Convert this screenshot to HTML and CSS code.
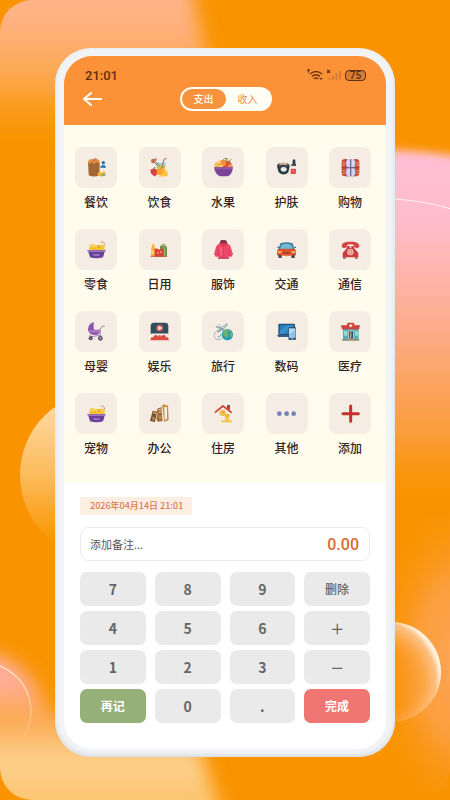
FILE: index.html
```html
<!DOCTYPE html>
<html lang="zh-CN">
<head>
    <meta charset="UTF-8">
    <meta name="viewport" content="width=device-width, initial-scale=1.0">
    <title>记一笔</title>
    <link rel="stylesheet" href="styles.css">
</head>
<body>
    <!-- backdrop -->
    <svg class="backdrop" viewBox="0 0 450 800" preserveAspectRatio="none" aria-hidden="true">
        <defs>
            <linearGradient id="bgPeach" gradientUnits="userSpaceOnUse" x1="0" y1="0" x2="0" y2="150">
                <stop offset="0" stop-color="#ffb48a"/>
                <stop offset="0.2" stop-color="#feb07a"/>
                <stop offset="0.55" stop-color="#fca648"/>
                <stop offset="1" stop-color="#fa9500" stop-opacity="0"/>
            </linearGradient>
            <linearGradient id="bgPink" gradientUnits="userSpaceOnUse" x1="0" y1="150" x2="0" y2="510">
                <stop offset="0" stop-color="#ffbfd6"/>
                <stop offset="0.2" stop-color="#ffbccb"/>
                <stop offset="0.5" stop-color="#fdac8a"/>
                <stop offset="0.8" stop-color="#fb9c38"/>
                <stop offset="1" stop-color="#fa9500" stop-opacity="0"/>
            </linearGradient>
            <linearGradient id="bgMoon" x1="0" y1="0" x2="0" y2="1">
                <stop offset="0" stop-color="#fee0b0"/>
                <stop offset="0.5" stop-color="#fcbb5c"/>
                <stop offset="0.9" stop-color="#fa9500"/>
            </linearGradient>
            <linearGradient id="bgCorner" gradientUnits="userSpaceOnUse" x1="0" y1="650" x2="0" y2="800">
                <stop offset="0" stop-color="#ffb3b4"/>
                <stop offset="0.2" stop-color="#ffae9c"/>
                <stop offset="0.45" stop-color="#fca84e"/>
                <stop offset="0.75" stop-color="#fdd190"/>
                <stop offset="1" stop-color="#fcc56e"/>
            </linearGradient>
            <radialGradient id="bgRing" cx="0.34" cy="0.6" r="0.66">
                <stop offset="0.5" stop-color="#fb9a2a" stop-opacity="0.1"/>
                <stop offset="0.75" stop-color="#fca849"/>
                <stop offset="0.92" stop-color="#fdbf80"/>
                <stop offset="1" stop-color="#fff0dc"/>
            </radialGradient>
            <radialGradient id="bgGlow">
                <stop offset="0" stop-color="#fda65a"/>
                <stop offset="0.5" stop-color="#fca14a" stop-opacity="0.8"/>
                <stop offset="1" stop-color="#fa9510" stop-opacity="0"/>
            </radialGradient>
            <linearGradient id="bgLine" x1="0" y1="0" x2="0" y2="1">
                <stop offset="0" stop-color="#ffe6cc"/>
                <stop offset="1" stop-color="#ffe6cc" stop-opacity="0"/>
            </linearGradient>
            <filter id="soft"><feGaussianBlur stdDeviation="9"/></filter>
            <filter id="softer"><feGaussianBlur stdDeviation="4"/></filter>
            <clipPath id="sheet"><rect width="450" height="800" rx="32"/></clipPath>
        </defs>
        <g clip-path="url(#sheet)">
            <path d="M-40-40H188Q195 20 212 70L200 160H-40Z" fill="url(#bgPeach)" filter="url(#soft)"/>
            <path d="M340 152Q400 145 480 160V510H340Z" fill="url(#bgPink)" filter="url(#softer)"/>
            <path d="M360 198Q415 197 455 210" fill="none" stroke="#fff2ee"/>
            <ellipse cx="460" cy="660" rx="85" ry="160" fill="url(#bgGlow)"/>
            <circle cx="104" cy="475" r="84" fill="url(#bgMoon)"/>
            <circle cx="391" cy="672" r="50" fill="url(#bgRing)"/>
            <path d="M-40 652Q20 648 44 700Q60 730 120 730H195Q205 770 232 840H-40Z" fill="url(#bgCorner)" filter="url(#soft)"/>
            <path d="M-4 664Q30 678 31 711Q30 735 12 750" fill="none" stroke="url(#bgLine)" stroke-width="1.4"/>
        </g>
    </svg>

    <svg width="0" height="0" class="sprite" aria-hidden="true">
        <symbol id="i-bowl" viewBox="0 0 57 57">
            <path d="M6 31L8 16L15 11L22 15L50 14Q56 22 51 31Z" fill="#f8c630"/>
            <path d="M10 18L14 13L20 18L47 17L45 22H12Z" fill="#ffdb63"/>
            <path d="M14 24h3m6 0h3M33 17v7m6-7v6" stroke="#a86824" stroke-width="2"/>
            <path d="M41 6Q52 3 53 17" fill="none" stroke="#d99770" stroke-width="3"/>
            <path d="M0 30H57L54 35H3Z" fill="#9269b6"/>
            <path d="M4 35H53L48 52Q29 58 9 52Z" fill="#6a3f99"/>
            <path d="M19 45h19" stroke="#a98bd0" stroke-width="4"/>
        </symbol>
    </svg>

    <main class="phone">
        <div class="screen">
            <header class="header">
                <div class="statusbar">
                    <span class="time">21:01</span>
                    <div class="signals">
                        <svg class="wifi" viewBox="0 0 16 12" aria-hidden="true">
                            <path d="M3 5Q9 0 15 5M5 7.500Q9 4 13 7.500M7 10Q9 8 11 10" fill="none" stroke="#6f3710" stroke-width="1.600"/>
                            <path d="M0 2l1.500-2l1.500 2M1.500 0v4" fill="none" stroke="#6f3710"/>
                            <path d="M12 9l2 2l2-2Z" fill="#6f3710"/>
                        </svg>
                        <svg class="cell" viewBox="0 0 14 12" aria-hidden="true">
                            <path d="M0 1l3 3m0-3l-3 3" stroke="#6f3710" stroke-width="1.400"/>
                            <path d="M2.500 11V9M6 11V7M9.500 11V4M13 11V2" stroke="#d57c38" stroke-width="2"/>
                        </svg>
                        <span class="battery">75</span>
                    </div>
                </div>
                <div class="navbar">
                    <button class="back" type="button" aria-label="返回">
                        <svg viewBox="0 0 20 16" aria-hidden="true">
                            <path d="M8 2L1 8L8 14M1 8H18" fill="none" stroke="#fff" stroke-width="2" stroke-linecap="round" stroke-linejoin="round"/>
                        </svg>
                    </button>
                    <div class="switch">
                        <button class="switch-item active" type="button">支出</button>
                        <button class="switch-item" type="button">收入</button>
                    </div>
                </div>
            </header>

            <section class="categories">
                <button class="category" type="button">
                    <span class="tile"><svg viewBox="0 0 57 57">
                        <path d="M3 12L11 3L19 9L25 0L34 6L38 14V52Q21 59 5 52Z" fill="#a76b38"/>
                        <path d="M2 11L10 3L16 8L25 2L37 7L36 16L28 12L21 18L15 12L7 17Z" fill="#e3903d"/>
                        <path d="M9 19v33M18 20v34M28 18v36" stroke="#96602f" stroke-width="2"/>
                        <circle cx="20" cy="6" r="4" fill="#e65d3f"/>
                        <circle cx="49" cy="14" r="5" fill="#2b70a7"/>
                        <path d="M39 29Q42 20 49 20Q56 20 57 30Z" fill="#317eb8"/>
                        <path d="M30 51L37 40L44 45L52 38L56 50L46 56Z" fill="#f3b632"/>
                        <path d="M44 50l11 1" stroke="#509b98" stroke-width="4"/>
                    </svg></span>
                    <span class="label">餐饮</span>
                </button>
                <button class="category" type="button">
                    <span class="tile"><svg viewBox="0 0 57 57">
                        <path d="M18 14H48L43 49H23Z" fill="#a9d3d2"/>
                        <path d="M22 25L45 23L42 49H25Z" fill="#f4b63d"/>
                        <path d="M12 11L25 26M36 25L43 3L50 1" fill="none" stroke="#a85e3e" stroke-width="3"/>
                        <circle cx="10" cy="9" r="7" fill="#b27154"/>
                        <circle cx="17" cy="5" r="4" fill="#cf8467"/>
                        <path d="M1 37Q9 27 21 36Q25 49 15 55Q3 53 1 37Z" fill="#df423d"/>
                        <path d="M11 32l5-4" stroke="#669340" stroke-width="4"/>
                        <circle cx="30" cy="41" r="10" fill="#f7a52d"/>
                        <path d="M23 54Q41 53 44 34Q56 39 53 53Q40 58 23 54Z" fill="#ffc640"/>
                        <path d="M20 12l11 12M32 31l10-6" stroke="#538f91" stroke-width="3"/>
                    </svg></span>
                    <span class="label">饮食</span>
                </button>
                <button class="category" type="button">
                    <span class="tile"><svg viewBox="0 0 57 57">
                        <circle cx="15" cy="22" r="13" fill="#f7b541"/>
                        <circle cx="39" cy="22" r="14" fill="#d94b39"/>
                        <circle cx="27" cy="15" r="10" fill="#f1903b"/>
                        <path d="M8 16l6-6l6 6M17 25l10-4" fill="none" stroke="#ffe090" stroke-width="4"/>
                        <path d="M28 6Q31-1 40 2L34 10M41 12l11-8" fill="none" stroke="#778a3c" stroke-width="3"/>
                        <circle cx="49" cy="25" r="7" fill="#f09849"/>
                        <path d="M0 28H57Q54 53 39 55H19Q4 51 0 28Z" fill="#7a4399"/>
                        <path d="M1 28H56L54 34H3Z" fill="#8f58a9"/>
                    </svg></span>
                    <span class="label">水果</span>
                </button>
                <button class="category" type="button">
                    <span class="tile"><svg viewBox="0 0 57 57">
                        <ellipse cx="19" cy="23" rx="19" ry="9" fill="#3e4854"/>
                        <path d="M7 17Q18 11 31 17L29 22Q17 17 8 22Z" fill="#dbb99c"/>
                        <path d="M0 25Q19 31 38 25L34 43Q20 56 5 43Z" fill="#263744"/>
                        <ellipse cx="20" cy="34" rx="9" ry="7" fill="#eceae2"/>
                        <path d="M47 7L51 3L55 7V16L58 20H44L47 15Z" fill="#28394b"/>
                        <path d="M43 19H57V24H43Z" fill="#395165"/>
                        <rect x="41" y="32" width="16" height="16" rx="2" fill="#dd4b51"/>
                        <path d="M45 36l9 8" stroke="#f26668" stroke-width="5"/>
                    </svg></span>
                    <span class="label">护肤</span>
                </button>
                <button class="category" type="button">
                    <span class="tile"><svg viewBox="0 0 57 57">
                        <rect x="2" y="3" width="53" height="52" rx="10" fill="#c64d36"/>
                        <path d="M18 3H40Q48 16 41 29Q48 43 40 55H18Q10 43 17 29Q10 16 18 3Z" fill="#d9d4ed"/>
                        <path d="M18 3Q10 16 17 27M40 3Q48 16 41 27M17 31Q10 43 18 55M41 31Q48 43 40 55" fill="none" stroke="#8c5c99" stroke-width="2"/>
                        <path d="M2 29H55" stroke="#9c413c" stroke-width="3"/>
                        <path d="M29 4V54M20 29H38" stroke="#6f689f" stroke-width="4"/>
                        <path d="M5 14h6M5 21h6M5 38h6M5 46h6M47 14h6M47 21h6M47 38h6M47 46h6" stroke="#f1a061" stroke-width="4"/>
                    </svg></span>
                    <span class="label">购物</span>
                </button>

                <button class="category" type="button">
                    <span class="tile"><svg><use href="#i-bowl"/></svg></span>
                    <span class="label">零食</span>
                </button>
                <button class="category" type="button">
                    <span class="tile"><svg viewBox="0 0 57 57">
                        <path d="M8 12H13V20L20 29V48H3V28Z" fill="#f4b13d"/>
                        <path d="M3 31H20V42H3Z" fill="#fbd170"/>
                        <path d="M30 17H48L51 23V49H31Z" fill="#6f8c4b"/>
                        <path d="M35 11H46V19H35Z" fill="#a6b26f"/>
                        <path d="M44 22V48" stroke="#9bb36b" stroke-width="4"/>
                        <path d="M13 28Q20 23 28 29Q36 24 40 30V50H14Z" fill="#dc4136"/>
                        <path d="M22 36h4v5h-4zM31 34h4v5h-4z" fill="#ffb084"/>
                        <path d="M2 49H51" stroke="#be5837" stroke-width="3"/>
                    </svg></span>
                    <span class="label">日用</span>
                </button>
                <button class="category" type="button">
                    <span class="tile"><svg viewBox="0 0 57 57">
                        <path d="M18 8L38 8L49 17L57 43L51 52L44 48L45 56H12L13 48L6 52L0 43L7 18Z" fill="#ef4968"/>
                        <path d="M19 2Q29-3 38 3L40 12H17Z" fill="#843245"/>
                        <path d="M17 12Q28 6 40 12L29 20Z" fill="#d63b59"/>
                        <path d="M14 28L11 48M43 27L47 48" stroke="#c93553" stroke-width="2"/>
                        <path d="M29 18V55" stroke="#d63b59" stroke-width="2"/>
                        <path d="M20 23l3 22" stroke="#fb6480" stroke-width="5"/>
                        <path d="M12 54H45" stroke="#b83b54" stroke-width="3"/>
                    </svg></span>
                    <span class="label">服饰</span>
                </button>
                <button class="category" type="button">
                    <span class="tile"><svg viewBox="0 0 57 57">
                        <path d="M10 10Q28 4 47 10L53 28H4Z" fill="#437e9e"/>
                        <path d="M14 14Q28 9 43 14L48 27H9Z" fill="#70b9d1"/>
                        <path d="M3 26H54L57 34V46Q29 51 0 46V33Z" fill="#d95231"/>
                        <path d="M2 34H15L12 39H2ZM42 34H55V39H45Z" fill="#ffb85b"/>
                        <path d="M4 45H14V54H5ZM43 45H53V54H43Z" fill="#394755"/>
                        <path d="M18 36H39L36 42H21Z" fill="#a8422f"/>
                        <path d="M12 46H45" stroke="#f28048" stroke-width="3"/>
                        <path d="M1 22h5m46 0h5" stroke="#377793" stroke-width="4"/>
                    </svg></span>
                    <span class="label">交通</span>
                </button>
                <button class="category" type="button">
                    <span class="tile"><svg viewBox="0 0 57 57">
                        <path d="M2 21Q0 8 19 5H38Q57 8 55 21L48 25L39 21V15Q28 11 18 15V21L9 25Z" fill="#d54443"/>
                        <path d="M19 18H26V23H31V18H38L40 25L52 39V52H5V39L17 25Z" fill="#cc3b3d"/>
                        <circle cx="28" cy="36" r="10" fill="#f4b4aa"/>
                        <circle cx="28" cy="36" r="6" fill="#e2726c"/>
                        <circle cx="28" cy="36" r="3" fill="#fff0e5"/>
                        <path d="M10 52v4m36-4v4" stroke="#8c3435" stroke-width="7"/>
                    </svg></span>
                    <span class="label">通信</span>
                </button>

                <button class="category" type="button">
                    <span class="tile"><svg viewBox="0 0 57 57">
                        <path d="M3 25Q2 6 20 0V23H42Q40 38 25 39Q7 40 3 25Z" fill="#8e5aab"/>
                        <path d="M4 22L20 24M9 9l11 14" stroke="#7c4a99" stroke-width="2"/>
                        <path d="M4 25H41L38 31H7Z" fill="#b07bc6"/>
                        <path d="M37 26L45 13H53M38 29L42 45M8 38L13 46M11 44L41 40" fill="none" stroke="#9f84b2" stroke-width="3"/>
                        <circle cx="11" cy="49" r="6" fill="#53415c"/>
                        <circle cx="40" cy="49" r="7" fill="#53415c"/>
                        <circle cx="11" cy="49" r="2" fill="#c8bccd"/>
                        <circle cx="40" cy="49" r="3" fill="#c8bccd"/>
                    </svg></span>
                    <span class="label">母婴</span>
                </button>
                <button class="category" type="button">
                    <span class="tile"><svg viewBox="0 0 57 57">
                        <path d="M2 35V12Q2 2 12 2H45Q55 2 55 12V35Z" fill="#304e5b"/>
                        <circle cx="29" cy="18" r="10" fill="#e65e64"/>
                        <path d="M25 11L37 18L25 25Z" fill="#fff2e8"/>
                        <path d="M5 35H53V41H5Z" fill="#f5ede4"/>
                        <circle cx="17" cy="45" r="6" fill="#c63f36"/>
                        <circle cx="29" cy="45" r="6" fill="#e45842"/>
                        <circle cx="41" cy="45" r="6" fill="#c63f36"/>
                        <path d="M4 46Q29 43 54 46L57 55H1Z" fill="#dc4c3f"/>
                    </svg></span>
                    <span class="label">娱乐</span>
                </button>
                <button class="category" type="button">
                    <span class="tile"><svg viewBox="0 0 57 57">
                        <circle cx="40" cy="38" r="17" fill="#299eb2"/>
                        <path d="M32 23L42 21L47 28L39 32L43 41L36 47L27 39L28 29ZM49 28L56 36L53 47L47 41Z" fill="#72ae77"/>
                        <path d="M24 49Q5 59 1 43Q-1 29 16 23L31 20" fill="none" stroke="#9cb8be" stroke-width="3"/>
                        <path d="M10 3L23 16L38 4L42 8L29 21L31 28L28 29L23 25L12 33L9 30L18 21L4 15L9 11L21 17Z" fill="#91a4aa"/>
                        <path d="M15 6L27 18L37 7" fill="none" stroke="#d6dfdf" stroke-width="3"/>
                        <path d="M11 45Q18 46 22 36" fill="none" stroke="#5ba8aa" stroke-width="3"/>
                    </svg></span>
                    <span class="label">旅行</span>
                </button>
                <button class="category" type="button">
                    <span class="tile"><svg viewBox="0 0 57 57">
                        <rect x="4" y="5" width="50" height="35" rx="3" fill="#244e73"/>
                        <path d="M8 9H50V36H8Z" fill="#287ebd"/>
                        <path d="M8 28L31 9H50L19 36H8Z" fill="#398fca"/>
                        <path d="M0 39H48V45H4Z" fill="#315e82"/>
                        <rect x="34" y="15" width="23" height="39" rx="4" fill="#345875"/>
                        <path d="M36 19H55V47H36Z" fill="#b4d9f2"/>
                        <path d="M36 38L55 22V47H36Z" fill="#8ec4ea"/>
                        <circle cx="46" cy="51" r="2" fill="#e4eef3"/>
                    </svg></span>
                    <span class="label">数码</span>
                </button>
                <button class="category" type="button">
                    <span class="tile"><svg viewBox="0 0 57 57">
                        <path d="M6 20H53V55H6Z" fill="#55adb8"/>
                        <path d="M0 10H17L20 2H38L41 10H57L54 22H3Z" fill="#cf4139"/>
                        <path d="M29 6V16M24 11H34" stroke="#fff1e6" stroke-width="4"/>
                        <path d="M22 25H38V53H22Z" fill="#edc6a5"/>
                        <path d="M24 28H36V50H24Z" fill="#315268"/>
                        <path d="M9 27H19V41H9ZM42 27H51V41H42Z" fill="#8bdee0"/>
                        <path d="M31 30Q25 34 30 39L27 49" fill="none" stroke="#e8e1cf" stroke-width="3"/>
                        <path d="M3 54H55" stroke="#9b6e57" stroke-width="3"/>
                    </svg></span>
                    <span class="label">医疗</span>
                </button>

                <button class="category" type="button">
                    <span class="tile"><svg><use href="#i-bowl"/></svg></span>
                    <span class="label">宠物</span>
                </button>
                <button class="category" type="button">
                    <span class="tile"><svg viewBox="0 0 57 57">
                        <path d="M8 20L22 23L15 54L0 51Z" fill="#76502e"/>
                        <path d="M22 14L34 9L38 51L23 53L18 43Z" fill="#98683a"/>
                        <path d="M36 5L41 1L54 5L56 48L42 54Z" fill="#c98e45"/>
                        <path d="M43 8L51 10V45L44 47Z" fill="#f5ede4"/>
                        <path d="M9 26l9 2M25 18l8-2M26 25l8-1" stroke="#e2b66b" stroke-width="4"/>
                        <path d="M8 38l6 1l-2 9l-6-1zM26 34l8-1v12l-8 1z" fill="#c18a4a"/>
                        <path d="M22 26L17 51M37 10L40 51" stroke="#f5ede4" stroke-width="2"/>
                    </svg></span>
                    <span class="label">办公</span>
                </button>
                <button class="category" type="button">
                    <span class="tile"><svg viewBox="0 0 57 57">
                        <path d="M3 25L27 6L53 26" fill="none" stroke="#c83e3d" stroke-width="5" stroke-linejoin="round"/>
                        <path d="M39 3H48V18L39 12Z" fill="#b23a3b"/>
                        <circle cx="26" cy="27" r="9" fill="#e9ad3e"/>
                        <circle cx="26" cy="27" r="6" fill="#ffd85b"/>
                        <path d="M34 30H46V42H34Z" fill="#edb42e"/>
                        <path d="M22 52H54M32 40h12m-11 6h12" stroke="#f5c23f" stroke-width="5"/>
                        <path d="M24 26h5m-2-4v9" stroke="#bd802f" stroke-width="2"/>
                    </svg></span>
                    <span class="label">住房</span>
                </button>
                <button class="category" type="button">
                    <span class="tile"><svg viewBox="0 0 57 57">
                        <circle cx="7" cy="29" r="7" fill="#7280bd"/>
                        <circle cx="29" cy="29" r="7" fill="#7280bd"/>
                        <circle cx="50" cy="29" r="7" fill="#7280bd"/>
                    </svg></span>
                    <span class="label">其他</span>
                </button>
                <button class="category" type="button">
                    <span class="tile"><svg viewBox="0 0 57 57">
                        <path d="M29 6V52M6 29H52" stroke="#c9302c" stroke-width="9" stroke-linecap="round"/>
                    </svg></span>
                    <span class="label">添加</span>
                </button>
            </section>

            <section class="entry">
                <button class="date" type="button">2026年04月14日 21:01</button>
                <div class="note">
                    <input class="note-input" type="text" placeholder="添加备注..." aria-label="添加备注">
                    <output class="amount">0.00</output>
                </div>
                <div class="keypad">
                    <button class="key" type="button">7</button>
                    <button class="key" type="button">8</button>
                    <button class="key" type="button">9</button>
                    <button class="key word" type="button">删除</button>
                    <button class="key" type="button">4</button>
                    <button class="key" type="button">5</button>
                    <button class="key" type="button">6</button>
                    <button class="key sign" type="button">＋</button>
                    <button class="key" type="button">1</button>
                    <button class="key" type="button">2</button>
                    <button class="key" type="button">3</button>
                    <button class="key sign" type="button">－</button>
                    <button class="key word again" type="button">再记</button>
                    <button class="key" type="button">0</button>
                    <button class="key" type="button">.</button>
                    <button class="key word done" type="button">完成</button>
                </div>
            </section>
        </div>
    </main>
</body>
</html>
```
FILE: styles.css
```css
* {
    margin: 0;
    padding: 0;
    box-sizing: border-box;
}

body {
    font-family: "Noto Sans CJK SC", "Noto Sans", sans-serif;
    background: #f99300;
    min-height: 100vh;
    padding: 48px 55px 43px;
    display: flex;
    position: relative;
    overflow-x: hidden;
}

button,
input {
    font-family: inherit;
    border: none;
    background: none;
}

button {
    cursor: pointer;
}

.backdrop {
    position: absolute;
    top: 0;
    left: 0;
    width: 100%;
    height: 100%;
}

.sprite {
    position: absolute;
}

.phone {
    position: relative;
    flex: 1;
    display: flex;
    padding: 8px 9px;
    border-radius: 36px;
    background: #f1f3f5;
    box-shadow: inset 0 -2px 4px #d5dadf;
}

.screen {
    flex: 1;
    display: flex;
    flex-direction: column;
    border-radius: 28px;
    background: #fff;
    overflow: hidden;
}

/* header */
.header {
    background: #fc9237;
    height: 69px;
    padding: 10px 20px 0 21px;
}

.statusbar {
    display: flex;
    align-items: center;
    justify-content: space-between;
    height: 18px;
    color: #5f2f10;
}

.time {
    font-family: Roboto, sans-serif;
    font-size: 13px;
    font-weight: 500;
}

.signals {
    display: flex;
    align-items: center;
    gap: 4px;
}

.wifi {
    width: 16px;
    height: 12px;
}

.cell {
    width: 14px;
    height: 12px;
}

.battery {
    width: 21px;
    height: 11px;
    border: 1px solid #5f2f10;
    border-radius: 4px;
    background: #d87c35;
    font-family: Roboto, sans-serif;
    font-size: 10px;
    font-weight: 500;
    line-height: 10px;
    text-align: center;
}

.navbar {
    display: grid;
    grid-template-columns: 1fr auto 1fr;
    align-items: center;
    margin-top: 3px;
}

.back {
    justify-self: start;
    width: 20px;
    height: 24px;
    margin-left: -2px;
}

.back svg {
    display: block;
    width: 20px;
    height: 16px;
}

.switch {
    display: flex;
    height: 24px;
    padding: 2px;
    border-radius: 12px;
    background: #fffef5;
}

.switch-item {
    width: 44px;
    border-radius: 10px;
    font-size: 10px;
    line-height: 20px;
    color: #e88b45;
}

.switch-item.active {
    background: #f8923c;
    color: #fff;
    font-weight: 500;
}

/* categories */
.categories {
    display: grid;
    grid-template-columns: repeat(5, 42px);
    justify-content: space-between;
    row-gap: 18px;
    padding: 22px 15px 26px 11px;
    background: #fffcee;
}

.tile {
    display: flex;
    align-items: center;
    justify-content: center;
    height: 41px;
    border-radius: 8px;
    background: #f5ede4;
}

.tile svg {
    width: 19px;
    height: 19px;
}

.label {
    display: block;
    margin-top: 5px;
    font-size: 12px;
    font-weight: 500;
    line-height: 18px;
    color: #33231c;
}

/* entry panel */
.entry {
    padding: 14px 16px 26px;
}

.date {
    display: block;
    padding: 0 9px 0 10px;
    height: 18px;
    font-size: 9px;
    font-weight: 500;
    line-height: 18px;
    color: #d97a4c;
    background: #fdeee4;
}

.note {
    display: flex;
    align-items: center;
    height: 34px;
    margin: 12px 0 11px;
    padding: 0 10px 0 9px;
    border: 1px solid #ededed;
    border-radius: 8px;
}

.note-input {
    flex: 1;
    min-width: 0;
    font-size: 11px;
    color: #5b5450;
    outline: none;
}

.note-input::placeholder {
    color: #5b5450;
    opacity: 1;
}

.amount {
    font-family: Roboto, sans-serif;
    font-size: 16px;
    font-weight: 500;
    color: #d96c33;
}

.keypad {
    display: grid;
    grid-template-columns: repeat(4, 1fr);
    gap: 5px 9px;
}

.key {
    height: 34px;
    border-radius: 7px;
    background: #eaeaea;
    color: #666;
    font-size: 14px;
    font-weight: 700;
    line-height: 34px;
}

.key.word {
    font-size: 12px;
    font-weight: 500;
}

.key.sign {
    font-weight: 500;
}

.key.again {
    background: #96b079;
    color: #fff;
    font-weight: 700;
}

.key.done {
    background: #f07673;
    color: #fff;
    font-weight: 700;
}
```
